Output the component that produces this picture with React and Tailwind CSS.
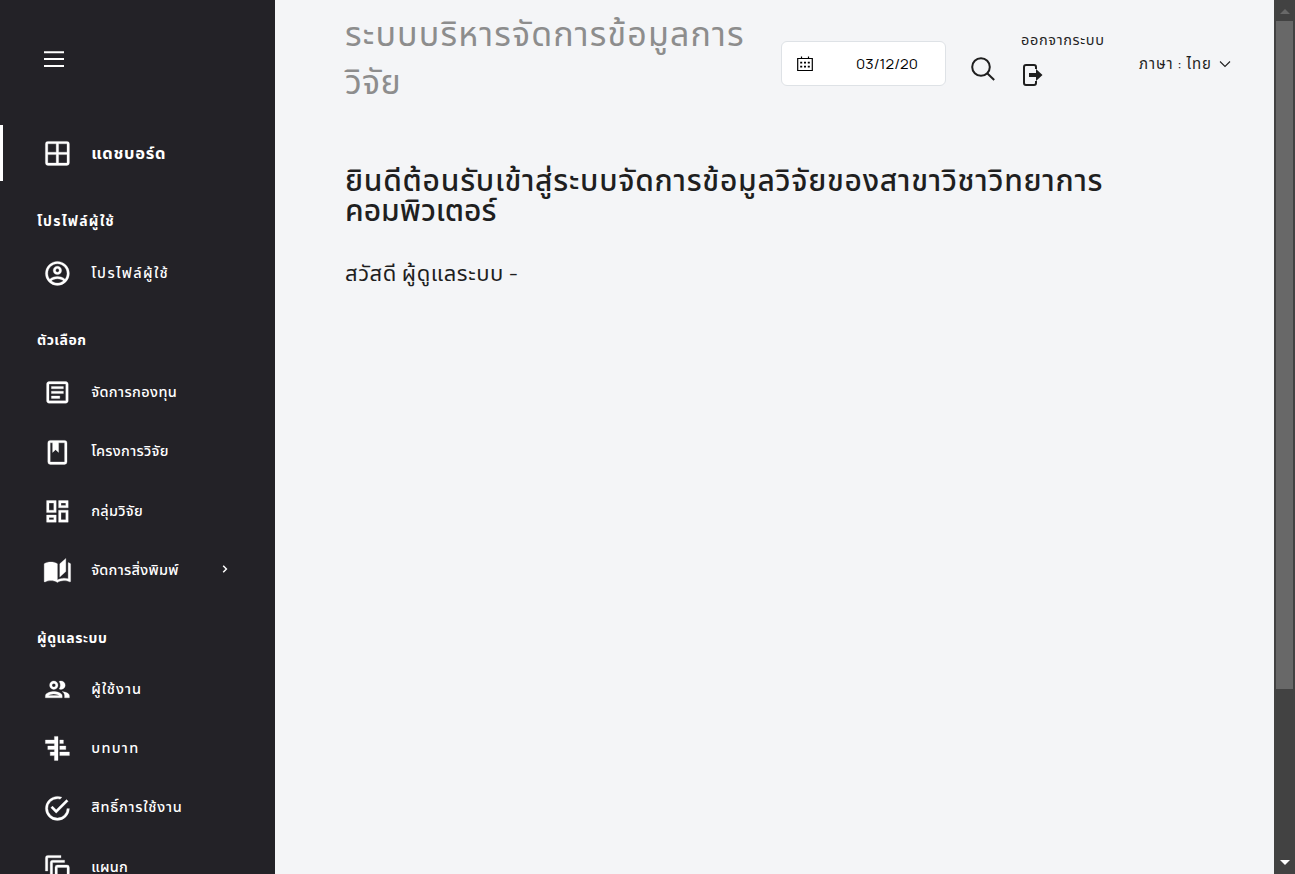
import React from "react";

function Icon({ d }) {
  return (
    <svg
      viewBox="0 0 24 24"
      className="mt-px h-[28.8px] w-[28.8px] shrink-0"
      fill="currentColor"
      stroke="currentColor"
      strokeWidth="0.25"
    >
      <path d={d} />
    </svg>
  );
}

const icons = {
  grid: "M4 2H20A2 2 0 0 1 22 4V20A2 2 0 0 1 20 22H4A2 2 0 0 1 2 20V4A2 2 0 0 1 4 2M4 4V11H11V4H4M4 20H11V13H4V20M20 20V13H13V20H20M20 4H13V11H20V4Z",
  account:
    "M12,2A10,10 0 0,0 2,12A10,10 0 0,0 12,22A10,10 0 0,0 22,12A10,10 0 0,0 12,2M7.07,18.28C7.5,17.38 10.12,16.5 12,16.5C13.88,16.5 16.5,17.38 16.93,18.28C15.57,19.36 13.86,20 12,20C10.14,20 8.43,19.36 7.07,18.28M18.36,16.83C16.93,15.09 13.46,14.5 12,14.5C10.54,14.5 7.07,15.09 5.64,16.83C4.62,15.5 4,13.82 4,12C4,7.59 7.59,4 12,4C16.41,4 20,7.59 20,12C20,13.82 19.38,15.5 18.36,16.83M12,6C10.06,6 8.5,7.56 8.5,9.5C8.5,11.44 10.06,13 12,13C13.94,13 15.5,11.44 15.5,9.5C15.5,7.56 13.94,6 12,6M12,11A1.5,1.5 0 0,1 10.5,9.5A1.5,1.5 0 0,1 12,8A1.5,1.5 0 0,1 13.5,9.5A1.5,1.5 0 0,1 12,11Z",
  text: "M5,3C3.89,3 3,3.89 3,5V19C3,20.11 3.89,21 5,21H19C20.11,21 21,20.11 21,19V5C21,3.89 20.11,3 19,3H5M5,5H19V19H5V5M7,7V9H17V7H7M7,11V13H17V11H7M7,15V17H14V15H7Z",
  book: "M18,2A2,2 0 0,1 20,4V20A2,2 0 0,1 18,22H6A2,2 0 0,1 4,20V4A2,2 0 0,1 6,2H18M18,4H13V12L10.5,9.75L8,12V4H6V20H18V4Z",
  dashboard:
    "M19,5V7H15V5H19M9,5V11H5V5H9M19,13V19H15V13H19M9,17V19H5V17H9M21,3H13V9H21V3M11,3H3V13H11V3M21,11H13V21H21V11M11,15H3V21H11V15Z",
  openBook:
    "M19 2L14 6.5V17.5L19 13V2M6.5 5C4.55 5 2.45 5.4 1 6.5V21.16C1 21.41 1.25 21.66 1.5 21.66C1.6 21.66 1.65 21.59 1.75 21.59C3.1 20.94 5.05 20.5 6.5 20.5C8.45 20.5 10.55 20.9 12 22C13.35 21.15 15.8 20.5 17.5 20.5C19.15 20.5 20.85 20.81 22.25 21.56C22.35 21.61 22.4 21.59 22.5 21.59C22.75 21.59 23 21.34 23 21.09V6.5C22.4 6.05 21.75 5.75 21 5.5V19C19.9 18.65 18.7 18.5 17.5 18.5C15.8 18.5 13.35 19.15 12 20V6.5C10.55 5.4 8.45 5 6.5 5Z",
  users:
    "M9 13.75c-2.34 0-7 1.17-7 3.5V19h14v-1.75c0-2.33-4.66-3.5-7-3.5zM4.34 17c.84-.58 2.87-1.25 4.66-1.25s3.82.67 4.66 1.25H4.34zM9 12c1.93 0 3.5-1.57 3.5-3.5S10.93 5 9 5 5.5 6.57 5.5 8.5 7.07 12 9 12zm0-5c.83 0 1.5.67 1.5 1.5S9.83 10 9 10s-1.5-.67-1.5-1.5S8.17 7 9 7zm7.04 6.81c1.16.84 1.96 1.96 1.96 3.44V19h4v-1.75c0-2.02-3.5-3.17-5.96-3.44zM15 12c1.93 0 3.5-1.57 3.5-3.5S16.93 5 15 5c-.54 0-1.04.13-1.5.35.63.89 1 1.98 1 3.15s-.37 2.26-1 3.15c.46.22.96.35 1.5.35z",
  roles: "M2 5H9.5V2H12.5V22H9.5V18H6V15H9.5V13H4V10H9.5V8H2V5M14 5H17V8H14V5M14 10H19V13H14V10M14 15H22V18H14V15Z",
  check:
    "M20,12A8,8 0 0,1 12,20A8,8 0 0,1 4,12A8,8 0 0,1 12,4C12.76,4 13.5,4.11 14.2,4.31L15.77,2.74C14.61,2.26 13.34,2 12,2A10,10 0 0,0 2,12A10,10 0 0,0 12,22A10,10 0 0,0 22,12M7.91,10.08L6.5,11.5L11,16L21,6L19.59,4.58L11,13.17L7.91,10.08Z",
  layers:
    "M4 2H15V4H4V15H2V4A2 2 0 0 1 4 2M8 6H18V8H8V18H6V8A2 2 0 0 1 8 6M12 10H20A2 2 0 0 1 22 12V20A2 2 0 0 1 20 22H12A2 2 0 0 1 10 20V12A2 2 0 0 1 12 10M12 12V20H20V12H12Z",
};

function Item({ icon, label, tracking, arrow }) {
  return (
    <a className="flex h-[59.4px] items-center pl-[43.3px] pr-[46px]">
      <Icon d={icons[icon]} />
      <span className={"ml-[19.1px] whitespace-nowrap text-[14.5px] font-medium leading-5 " + tracking}>{label}</span>
      {arrow && (
        <svg viewBox="0 0 8 8" className="mb-0.5 ml-auto h-2 w-2" fill="none" stroke="currentColor" strokeWidth="1.5">
          <path d="M2.2 .8L5.4 4L2.2 7.2" />
        </svg>
      )}
    </a>
  );
}

function Heading({ children, className = "" }) {
  return (
    <h2 className={"flex h-[60px] items-center pl-[37px] text-[14px] font-bold leading-5 " + className}>
      <span className="whitespace-nowrap">{children}</span>
    </h2>
  );
}

export default function App() {
  return (
    <div className="flex h-[874px] w-full overflow-hidden bg-[#f4f5f7] font-['Manrope','Inter','Noto_Sans','Noto_Sans_Thai',sans-serif] text-[#1f1f1f]">
      <aside className="h-full w-[275px] shrink-0 overflow-hidden bg-[#232227] text-white">
        <div className="flex h-[125px] items-start pl-11 pt-[50px]">
          <svg viewBox="0 0 20 18" className="h-[18px] w-5" fill="none" stroke="currentColor" strokeWidth="2">
            <path d="M0 2.2H20M0 9H20M0 16H20" />
          </svg>
        </div>
        <div className="flex h-14 items-center border-l-[3px] border-white pl-[40.3px]">
          <Icon d={icons.grid} />
          <span className="ml-[19.1px] whitespace-nowrap text-[16.5px] font-bold leading-6 tracking-[0.7px]">แดชบอร์ด</span>
        </div>
        <Heading className="mt-[10px] tracking-[1.3px]">โปรไฟล์ผู้ใช้</Heading>
        <div className="-mt-[8px]">
          <Item icon="account" label="โปรไฟล์ผู้ใช้" tracking="tracking-[1.4px]" />
        </div>
        <Heading className="mt-[8px] tracking-[0.5px]">ตัวเลือก</Heading>
        <div className="-mt-[8px]">
          <Item icon="text" label="จัดการกองทุน" tracking="tracking-[0.4px]" />
          <Item icon="book" label="โครงการวิจัย" tracking="tracking-[0.3px]" />
          <Item icon="dashboard" label="กลุ่มวิจัย" tracking="tracking-[0.3px]" />
          <Item icon="openBook" label="จัดการสิ่งพิมพ์" tracking="tracking-[0.3px]" arrow />
        </div>
        <Heading className="mt-[8px] tracking-[0.6px]">ผู้ดูแลระบบ</Heading>
        <div className="-mt-[9px]">
          <Item icon="users" label="ผู้ใช้งาน" tracking="tracking-[1px]" />
          <Item icon="roles" label="บทบาท" tracking="tracking-[1.3px]" />
          <Item icon="check" label="สิทธิ์การใช้งาน" tracking="tracking-[0.8px]" />
          <Item icon="layers" label="แผนก" tracking="tracking-[0.2px]" />
        </div>
      </aside>

      <div className="min-w-0 flex-1">
        <header className="flex h-[128px] items-start pl-[70px]">
          <h1 className="w-[436px] shrink-0 whitespace-nowrap pt-[9px] text-[34px] leading-[48px] text-[#8d8d8d]">
            <span className="tracking-[1.15px]">ระบบบริหารจัดการข้อมูลการ</span>
            <br />
            <span className="tracking-[0.3px]">วิจัย</span>
          </h1>
          <div className="mt-[41px] flex h-[45px] w-[165px] shrink-0 items-center rounded-md border border-[#dee2e6] bg-white pl-[15px] text-black">
            <svg viewBox="0 0 16 16" className="h-4 w-4" fill="none" stroke="currentColor">
              <path d="M.7 2.5H15.3V14.5H.7ZM4.5 .5V3M11.5 .5V3" strokeWidth="1.2" />
              <path d="M3.2 6.7H12.8M3.2 10.7H12.8" strokeWidth="1.8" strokeDasharray="2 1.8" />
            </svg>
            <span className="ml-[43px] w-[63px] overflow-hidden whitespace-nowrap text-[15px] leading-5 tracking-[0.1px]">03/12/20</span>
          </div>
          <svg viewBox="0 0 24 24" className="ml-[25px] mr-px mt-[57px] h-6 w-6 shrink-0" fill="none" stroke="currentColor" strokeWidth="2">
            <circle cx="10" cy="10" r="8.8" />
            <path d="M16.2 16.2L23.2 23" />
          </svg>
          <div className="ml-[25px] w-[118px] shrink-0 pt-[30px]">
            <div className="whitespace-nowrap text-[14.5px] leading-5 tracking-[0.65px]">ออกจากระบบ</div>
            <svg viewBox="0 0 20 22" className="ml-[2px] mt-[14px] h-[22px] w-5" fill="none" stroke="currentColor" strokeWidth="2">
              <path d="M13 5V3Q13 1 11 1H3Q1 1 1 3V19Q1 21 3 21H11Q13 21 13 19V17" />
              <path d="M6 9H13V5L19.5 11L13 17V13H6Z" fill="currentColor" stroke="none" />
            </svg>
          </div>
          <div className="flex h-[128px] shrink-0 items-center whitespace-nowrap text-[15px] leading-5">
            <span className="w-[80px] tracking-[0.9px]">ภาษา : ไทย</span>
            <svg viewBox="0 0 12 8" className="h-2 w-3" fill="none" stroke="currentColor" strokeWidth="1.1">
              <path d="M1 1.5L6 6.5L11 1.5" />
            </svg>
          </div>
        </header>
        <main className="pl-[70px] pt-[37px]">
          <h3 className="whitespace-nowrap text-[30px] font-medium leading-[30px]">
            <span className="tracking-[0.74px]">ยินดีต้อนรับเข้าสู่ระบบจัดการข้อมูลวิจัยของสาขาวิชาวิทยาการ</span>
            <br />
            คอมพิวเตอร์
          </h3>
          <h4 className="mt-[36px] whitespace-nowrap text-[22px] leading-6 tracking-[0.58px]">สวัสดี ผู้ดูแลระบบ -</h4>
        </main>
      </div>

      <div className="flex w-[21px] shrink-0 flex-col items-center justify-between bg-[#424242]">
        <div className="flex flex-col items-center">
          <svg viewBox="0 0 10 21" className="h-[21px] w-2.5" fill="#686868">
            <path d="M0 14L5 9L10 14Z" />
          </svg>
          <div className="h-[668px] w-[17px] bg-[#686868]" />
        </div>
        <svg viewBox="0 0 10 17" className="h-[17px] w-2.5" fill="#fff">
          <path d="M0 3H10L5 8Z" />
        </svg>
      </div>
    </div>
  );
}
